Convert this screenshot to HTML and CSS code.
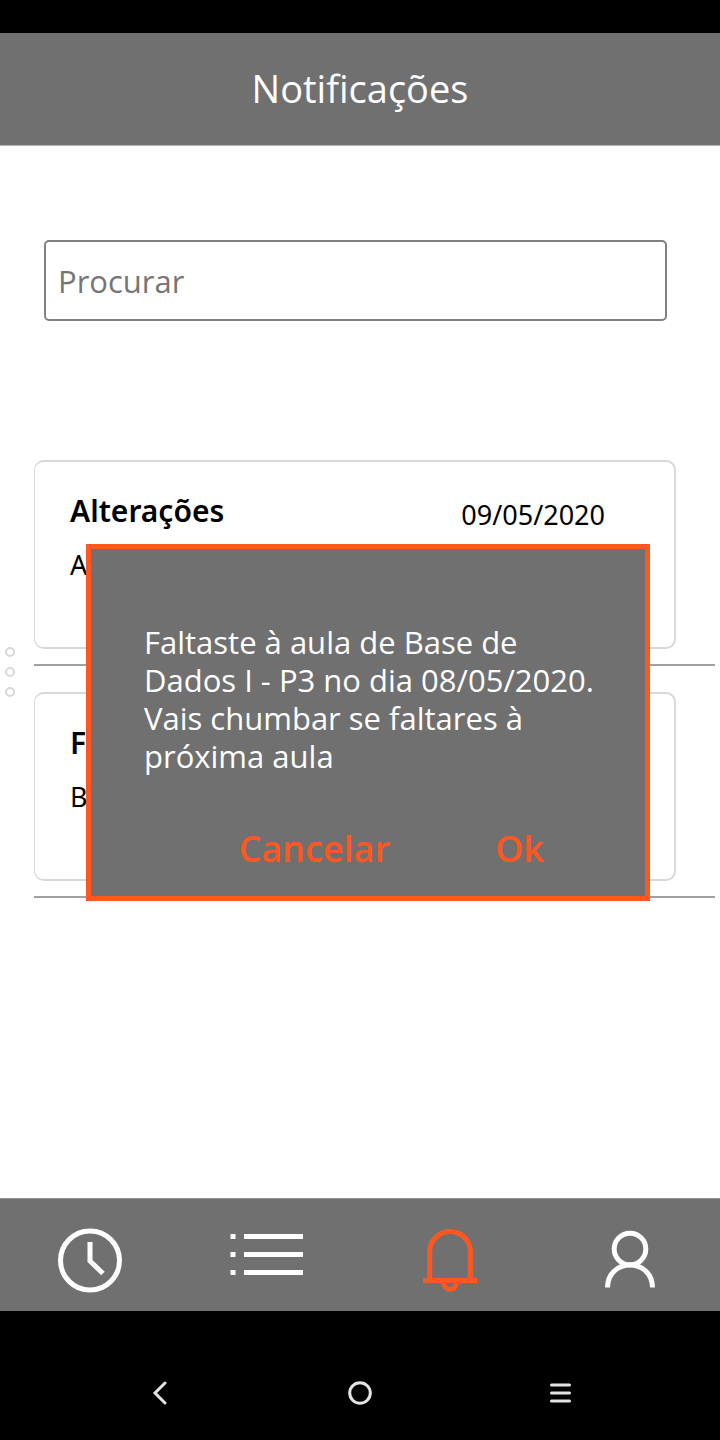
FILE: index.html
```html
<!DOCTYPE html>
<html lang="pt">
<head>
<meta charset="utf-8">
<meta name="viewport" content="width=device-width, initial-scale=1">
<title>Notificações</title>
<link rel="stylesheet" href="styles.css">
</head>
<body>
<div class="status-bar"></div>
<header class="header"><h1 class="title">Notificações</h1></header>
<main class="main">
  <input class="search" type="text" placeholder="Procurar" aria-label="Procurar">
  <div class="feed">
    <div class="handle">
      <span class="dot"></span><span class="dot"></span><span class="dot"></span>
    </div>
    <ul class="list">
      <li class="item">
        <article class="card">
          <div class="card-head"><h2 class="card-title">Alterações</h2><time class="date">09/05/2020</time></div>
          <p class="card-text">Al</p>
        </article>
      </li>
      <li class="item">
        <article class="card">
          <div class="card-head"><h2 class="card-title">Fa</h2></div>
          <p class="card-text">Ba</p>
        </article>
      </li>
    </ul>
  </div>
  <div class="dialog" role="dialog" aria-labelledby="message">
    <p class="message" id="message">Faltaste à aula de Base de Dados I - P3 no dia 08/05/2020. Vais chumbar se faltares à próxima aula</p>
    <div class="actions">
      <button class="action" type="button">Cancelar</button>
      <button class="action" type="button">Ok</button>
    </div>
  </div>
</main>
<nav class="tabs">
  <button class="tab" type="button" aria-label="Horário">
    <svg width="80" height="72" viewBox="0 0 80 72"><circle cx="40" cy="36.500" r="29.500"/><path d="M40 18v19l13 12.500"/></svg>
  </button>
  <button class="tab" type="button" aria-label="Lista">
    <svg width="80" height="72" viewBox="0 0 80 72"><path d="M0.500 12.500h5M14 12.500h59M0.500 30.500h5M14 30.500h59M0.500 48.500h5M14 48.500h59"/></svg>
  </button>
  <button class="tab tab-active" type="button" aria-label="Notificações">
    <svg width="80" height="72" viewBox="0 0 80 72"><path d="M13 56.500h54M19.700 56V27.500a20.300 20 0 0 1 40.600 0V56M33.500 58a6.500 7.500 0 0 0 13 0"/></svg>
  </button>
  <button class="tab" type="button" aria-label="Perfil">
    <svg width="80" height="72" viewBox="0 0 80 72"><circle cx="40" cy="25" r="15.800"/><path d="M17.500 63.500C17.500 50 27.500 41 40 41S62.500 50 62.500 63.500"/></svg>
  </button>
</nav>
<footer class="system">
  <button class="key" type="button" aria-label="Voltar"><svg width="24" height="24" viewBox="0 0 24 24"><path d="M17 2L7 12l10 10"/></svg></button>
  <button class="key" type="button" aria-label="Início"><svg width="24" height="24" viewBox="0 0 24 24"><circle cx="12" cy="12" r="10.300"/></svg></button>
  <button class="key" type="button" aria-label="Menu"><svg width="24" height="24" viewBox="0 0 24 24"><path d="M3.500 4h18M3.500 12h18M3.500 20h18"/></svg></button>
</footer>
</body>
</html>
```

FILE: styles.css
```css
* { box-sizing: border-box; }
body {
  margin: 0;
  min-height: 100vh;
  display: flex;
  flex-direction: column;
  background: #fff;
  color: #000;
  font-family: "Noto Sans", "Open Sans", sans-serif;
}
h1, h2, p, ul { margin: 0; padding: 0; font-weight: 400; }
button { padding: 0; border: 0; background: none; font: inherit; }
svg { display: block; fill: none; stroke: currentColor; }
.status-bar { height: 33px; background: #000; }
.header {
  height: 113px;
  display: flex;
  align-items: center;
  justify-content: center;
  padding-bottom: 2px;
  background: #707070;
  border-bottom: 1px solid #b4b4b4;
  color: #fff;
}
.title { font-family: "Open Sans", sans-serif; font-size: 38px; line-height: 52px; }
.main { position: relative; flex: 1; padding-top: 94px; }
.search {
  display: block;
  width: calc(100% - 97px);
  height: 81px;
  margin: 0 53px 0 44px;
  padding: 0 12px;
  border: 2px solid #808080;
  border-radius: 5px;
  background: #fff;
  font-family: "Open Sans", sans-serif;
  font-size: 31px;
}
.search::placeholder { color: #757575; opacity: 1; }
.feed { display: flex; align-items: flex-start; margin-top: 139px; padding: 0 5px; }
.handle { width: 29px; display: flex; flex-direction: column; gap: 10px; margin-top: 187px; }
.dot { width: 10px; height: 10px; border: 2px solid #d8d8d8; border-radius: 50%; }
.list { flex: 1; list-style: none; display: grid; gap: 26px; }
.item { padding-bottom: 15px; border-bottom: 2px solid #a0a0a0; }
.card {
  height: 189px;
  margin-right: 39px;
  padding: 29px 69px 0 35px;
  border: 2px solid #d8d8d8;
  border-left-width: 1px;
  border-radius: 10px;
}
.card-head { display: flex; justify-content: space-between; align-items: flex-end; }
.card-title { font-weight: 600; font-size: 30px; line-height: 40px; }
.date { font-size: 27px; line-height: 32px; }
.card-text { margin-top: 16px; font-size: 27px; line-height: 36px; }
.dialog {
  position: absolute;
  top: 398px;
  left: 86px;
  right: 70px;
  padding: 74px 36px 21px 53px;
  border: 5px solid #ff5722;
  background: #707070;
  color: #fff;
}
.message { font-family: "Open Sans", sans-serif; font-size: 31px; line-height: 38px; }
.actions { display: flex; justify-content: flex-end; gap: 105px; margin-top: 48px; padding-right: 65px; }
.action { color: #ff5722; font-family: "Open Sans", sans-serif; font-weight: 600; font-size: 36px; line-height: 52px; }
.tabs {
  height: 113px;
  display: grid;
  grid-template-columns: repeat(4, 1fr);
  background: #707070;
  border-top: 1px solid #909090;
  color: #fff;
  stroke-width: 5px;
}
.tab { display: flex; align-items: flex-start; justify-content: center; padding-top: 25px; color: #fff; }
.tab-active { color: #ff5722; }
.system { height: 129px; display: flex; align-items: center; justify-content: center; gap: 176px; padding-top: 34px; background: #000; stroke-width: 3px; stroke-linecap: round; }
.key { width: 24px; color: #e4e4e4; }
```
